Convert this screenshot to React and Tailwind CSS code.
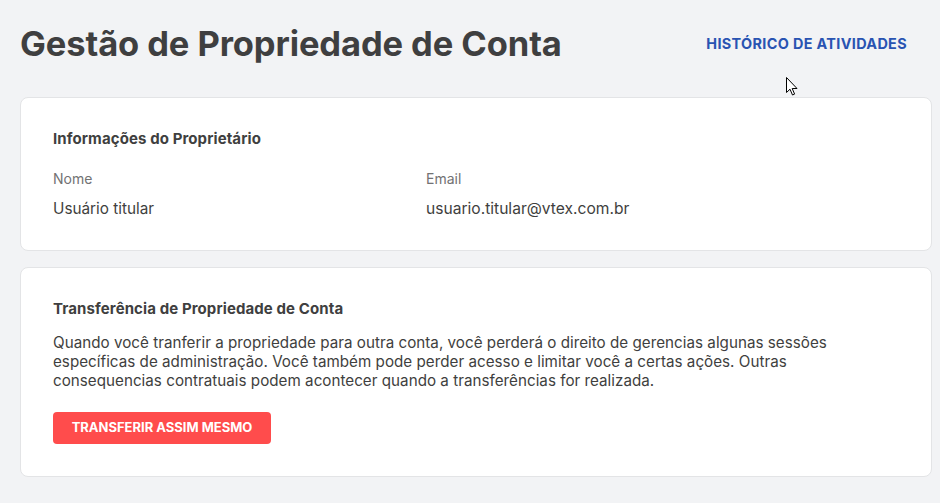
export default function App() {
  return (
    <div
      className="relative min-h-[503px] w-full bg-[#f2f3f5] pl-5 pr-2 pb-6 text-[#3f3f40]"
      style={{ fontFamily: 'Inter, "Noto Sans", sans-serif' }}
    >
      <div className="flex items-center justify-between pt-[23px] pb-[32px]">
        <h1 className="text-[34.5px] font-bold leading-[42px] tracking-[-0.1px] text-[#3f3f40]">
          Gestão de Propriedade de Conta
        </h1>
        <a className="mr-[25px] text-[14.4px] font-bold tracking-[0.35px] text-[#2953b2]">
          HISTÓRICO DE ATIVIDADES
        </a>
      </div>

      <div className="rounded-lg border border-[#e3e4e6] bg-white px-8 pt-[31px] pb-[31px]">
        <h2 className="text-[15px] font-bold leading-5 tracking-[0.1px] text-[#3f3f40]">
          Informações do Proprietário
        </h2>
        <div className="mt-5 flex">
          <div className="w-[373px]">
            <div className="text-[14px] leading-5 text-[#727273]">Nome</div>
            <div className="mt-[10px] text-[15.3px] leading-5 text-[#3f3f40]">Usuário titular</div>
          </div>
          <div>
            <div className="text-[14px] leading-5 text-[#727273]">Email</div>
            <div className="mt-[10px] text-[15.6px] leading-5 text-[#3f3f40]">usuario.titular@vtex.com.br</div>
          </div>
        </div>
      </div>

      <div className="mt-4 rounded-lg border border-[#e3e4e6] bg-white px-8 pt-[31px] pb-[32px]">
        <h2 className="text-[15px] font-bold leading-5 tracking-[0.1px] text-[#3f3f40]">
          Transferência de Propriedade de Conta
        </h2>
        <p className="mt-[14px] max-w-[800px] text-[15.2px] leading-[19px] tracking-[0.02px] text-[#3f3f40]">
          Quando você tranferir a propriedade para outra conta, você perderá o direito de gerencias algunas sessões
          específicas de administração. Você também pode perder acesso e limitar você a certas ações. Outras
          consequencias contratuais podem acontecer quando a transferências for realizada.
        </p>
        <button className="mt-[22px] flex h-8 w-[218px] items-center justify-center rounded bg-[#ff4c4c] text-[13px] font-bold text-white">
          TRANSFERIR ASSIM MESMO
        </button>
      </div>

      <svg className="absolute left-[786px] top-[77px]" width="12" height="19" viewBox="0 0 12 19">
        <path d="M0.5 0.5 L0.5 15.5 L4 12.2 L6.5 18 L8.6 17.1 L6.2 11.5 L11 11.5 Z" fill="white" stroke="black" strokeWidth="1" strokeLinejoin="round" />
      </svg>
    </div>
  );
}
